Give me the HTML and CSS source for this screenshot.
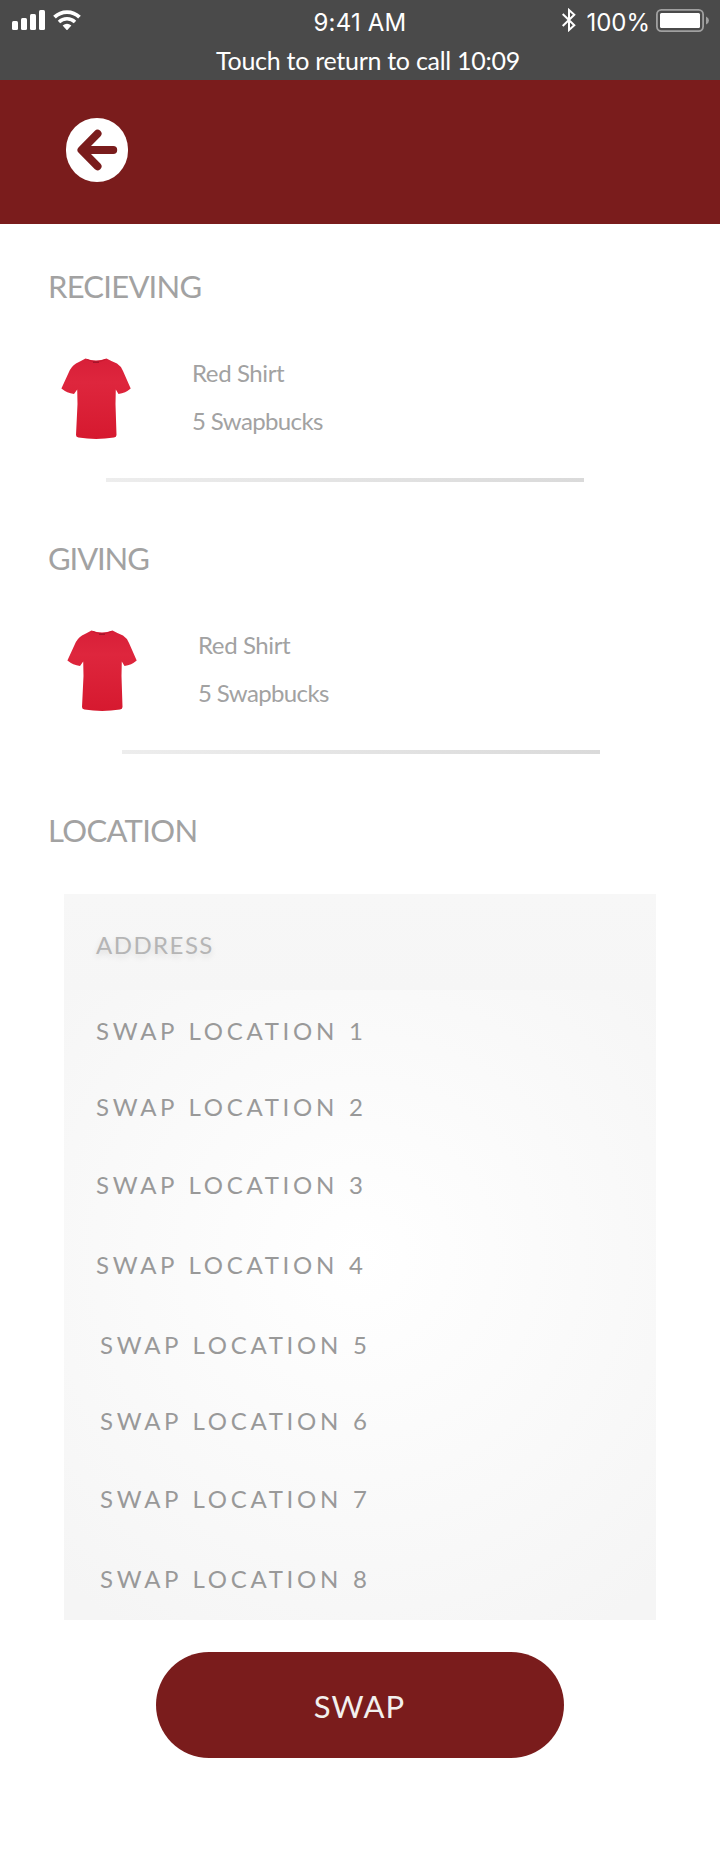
FILE: index.html
```html
<!DOCTYPE html>
<html lang="en">
<head>
<meta charset="utf-8">
<title>Swap</title>
<link rel="stylesheet" href="styles.css">
</head>
<body>
<svg class="defs" width="0" height="0" aria-hidden="true">
  <defs>
    <linearGradient id="cloth" x1="0" y1="0" x2="0" y2="1">
      <stop offset="0" stop-color="#d81f38"/>
      <stop offset=".3" stop-color="#de263d"/>
      <stop offset="1" stop-color="#d6192f"/>
    </linearGradient>
    <symbol id="shirt" viewBox="0 0 70 81">
      <path fill="url(#cloth)" d="M24.500 .5Q35 4.500 45.500 .5Q50 3 56 5.500Q60 8 62 13L69.700 30.500Q64.500 35 57.500 36L54.800 31.500L54.500 46L55.500 77Q55.500 79 53 79.600Q35 82.300 17.500 79.600Q15 79 15 77L16.500 46L16.200 31.500L13 36Q6 35 .4 30.500L7.500 15Q10 8.500 15 5.500Q20 3 24.500 .5Z"/>
      <path fill="none" stroke="#c8182f" stroke-width="1" d="M26 1.500Q35 6.200 44.500 1.500"/>
      <path fill="#a5152a" d="M32 3.500H38V5H32Z"/>
    </symbol>
  </defs>
</svg>

<header class="status">
  <div class="status-row">
    <div class="status-left">
      <svg width="33" height="20" viewBox="0 0 33 20" fill="#fff"><rect y="11" width="6" height="9" rx="1.500"/><rect x="9" y="8" width="6" height="12" rx="1.500"/><rect x="18" y="4" width="6" height="16" rx="1.500"/><rect x="27" width="6" height="20" rx="1.500"/></svg>
      <svg width="28" height="20" viewBox="0 0 28 20" fill="none" stroke="#fff"><path stroke-width="3.800" d="M1.500 7.200A17.800 17.800 0 0 1 26.500 7.200"/><path stroke-width="3.500" d="M6 11.900A11.500 11.500 0 0 1 22 11.900"/><path fill="#fff" stroke="none" d="M9.600 15.600Q14 11.900 18.400 15.600L14.600 19.700Q14 20.300 13.400 19.700Z"/></svg>
    </div>
    <div class="time">9:41 AM</div>
    <div class="status-right">
      <svg class="bluetooth" width="14" height="24" viewBox="0 0 14 24" fill="none" stroke="#fff" stroke-width="2"><path d="M.7 6L12.300 17.200L7 22V2L12.300 6.800L.7 18"/></svg>
      <span class="percent">100%</span>
      <svg class="battery" width="54" height="23" viewBox="0 0 54 23"><rect x=".9" y=".9" width="46.200" height="21.200" rx="4.500" fill="none" stroke="#a0a0a0" stroke-width="1.800"/><rect x="4" y="4" width="40" height="15" rx="1.500" fill="#fff"/><path d="M50 7.500Q53 9 53 11.500T50 15.500Z" fill="#a0a0a0"/></svg>
    </div>
  </div>
  <div class="call">Touch to return to call 10:09</div>
</header>

<nav class="bar">
  <svg width="62" height="64" viewBox="0 0 62 64"><rect width="62" height="64" rx="31" fill="#fff"/><path d="M31.500 15.700L15.500 32L31.500 48.300M16 32H47.200" fill="none" stroke="#7a1c1c" stroke-width="8" stroke-linecap="round" stroke-linejoin="round"/></svg>
</nav>

<main class="content">
  <section>
    <h2 class="title receiving">RECIEVING</h2>
    <div class="item">
      <svg width="70" height="81"><use href="#shirt"/></svg>
      <div class="details"><p class="name">Red Shirt</p><p class="price">5 Swapbucks</p></div>
    </div>
    <div class="divider"></div>
  </section>
  <section class="second">
    <h2 class="title giving">GIVING</h2>
    <div class="item">
      <svg width="70" height="81"><use href="#shirt"/></svg>
      <div class="details"><p class="name">Red Shirt</p><p class="price">5 Swapbucks</p></div>
    </div>
    <div class="divider"></div>
  </section>
  <section>
    <h2 class="title location">LOCATION</h2>
    <div class="panel">
      <div class="panel-head">ADDRESS</div>
      <ul class="places">
        <li>SWAP LOCATION 1</li>
        <li>SWAP LOCATION 2</li>
        <li>SWAP LOCATION 3</li>
        <li>SWAP LOCATION 4</li>
      </ul>
      <ul class="places more">
        <li>SWAP LOCATION 5</li>
        <li>SWAP LOCATION 6</li>
        <li>SWAP LOCATION 7</li>
        <li>SWAP LOCATION 8</li>
      </ul>
    </div>
  </section>
  <button class="swap" type="button">SWAP</button>
</main>
</body>
</html>
```

FILE: styles.css
```css
* { box-sizing: border-box; margin: 0; padding: 0; }
body { width: 720px; min-height: 1868px; background: #fff; font-family: Lato, "Liberation Sans", sans-serif; color: #a2a2a2; }
svg { display: block; flex: none; }
.defs { position: absolute; }

.status { height: 80px; background: #4a4a4a; color: #fff; }
.status-row { display: grid; grid-template-columns: 1fr auto 1fr; height: 45px; font: 24px/29px Inter, "Liberation Sans", sans-serif; }
.status-left { display: flex; gap: 8px; padding: 10px 0 0 12px; }
.time { padding-top: 8px; letter-spacing: .2px; }
.status-right { display: flex; justify-content: flex-end; padding: 8px 10px 0 0; }
.percent { margin-left: 10px; }
.battery { margin: 1px 0 0 6px; }
.call { font-size: 25px; line-height: 30px; letter-spacing: -.28px; text-align: center; padding-left: 16px; }

.bar { height: 144px; background: #7a1c1c; padding: 38px 66px; }

.content { padding-top: 43px; }
.title { font-weight: 400; font-size: 31px; line-height: 38px; padding-left: 48px; }
.receiving { letter-spacing: -.75px; }
.giving { letter-spacing: -1.1px; }
.location { letter-spacing: -.65px; }
.item { display: flex; margin-top: 53px; padding-left: 61px; }
.details { display: flex; flex-direction: column; gap: 19px; margin-left: 61px; font-size: 24px; line-height: 29px; }
.name { letter-spacing: -.4px; }
.price { letter-spacing: -.62px; }
.divider { width: 478px; height: 4px; margin: 39px 0 57px 106px; background: linear-gradient(90deg, #ededed, #dadada); }
.second .item { padding-left: 67px; }
.second .divider { margin-left: 122px; }

.panel { width: 592px; height: 726px; margin: 45px 0 0 64px; background: radial-gradient(circle 440px at 50% 50%, #fff, #f5f5f5); font-size: 24px; line-height: 29px; }
.panel-head { height: 96px; margin-bottom: 26px; padding: 36px 32px 0; background: linear-gradient(#f7f7f7, #f6f6f6); color: #b5b5b5; letter-spacing: 1.45px; text-shadow: 0 3px 6px rgba(0, 0, 0, .12); }
.places { list-style: none; padding-left: 32px; color: #999; letter-spacing: 3.7px; word-spacing: 1.2px; }
.places li + li { margin-top: 47px; }
.places li:nth-child(3) { margin-top: 49px; }
.places li:nth-child(4) { margin-top: 51px; }
.more { margin-top: 51px; padding-left: 36px; }

.swap { display: block; width: 408px; height: 106px; margin: 32px 0 0 156px; padding: 2px 1px 0 0; border: 0; border-radius: 53px; background: #7a1c1c; color: #f2f0ee; font: 31px/38px Lato, "Liberation Sans", sans-serif; letter-spacing: 1.1px; }
```
